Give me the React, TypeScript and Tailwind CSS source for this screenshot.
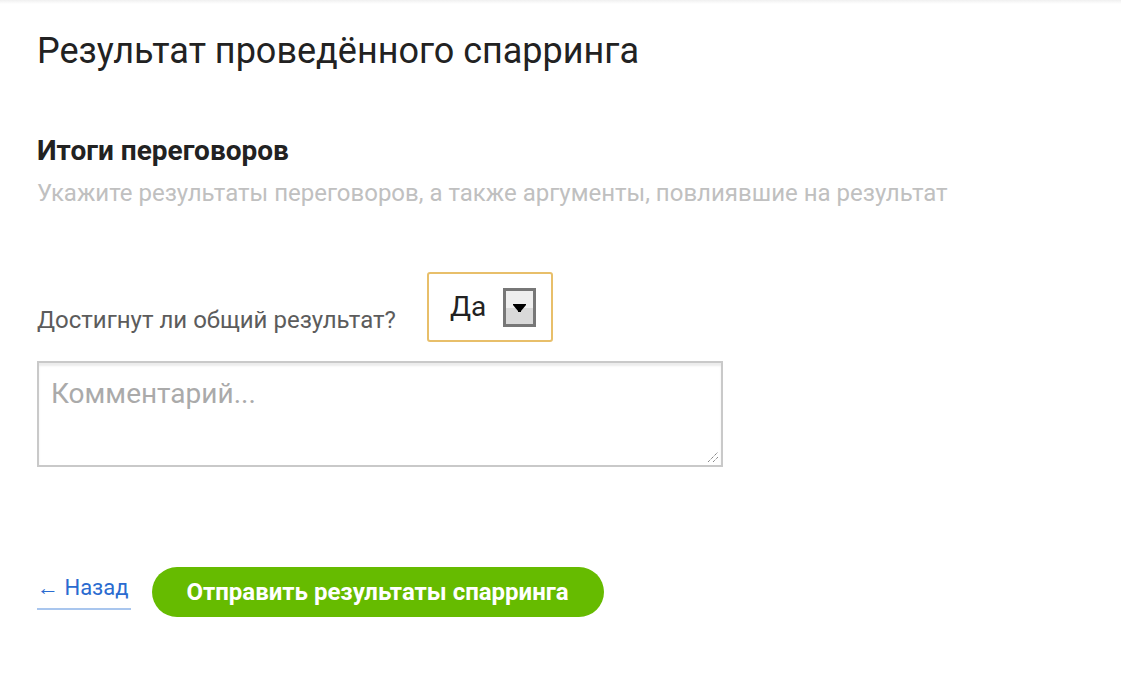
import { ChangeEvent, useState } from 'react';

function SelectBox({
  value,
  onChange,
}: {
  value: string;
  onChange: (value: string) => void;
}) {
  return (
    <div className="relative ml-[31px] flex h-[70px] w-[126px] items-center rounded-[3px] border-2 border-[#e8bf6a] pl-[21px]">
      <span className="w-[33px] text-[28px] leading-none text-[#222]">{value}</span>
      <div className="ml-[20px] h-[39px] w-[33px] border-[3px] border-[#777]">
        <div className="relative flex h-full flex-col">
          <div className="h-[17px] bg-[#efefef]" />
          <div className="flex-1 bg-[#d9d9d9]" />
          <svg
            className="absolute left-[7px] top-[13px]"
            width="13"
            height="8"
            viewBox="0 0 13 8"
          >
            <path d="M0 0h13v1l-5 6v1h-3v-1l-5-6z" fill="#000" />
          </svg>
        </div>
      </div>
      <select
        value={value}
        onChange={(e: ChangeEvent<HTMLSelectElement>) => onChange(e.target.value)}
        className="absolute inset-0 cursor-pointer opacity-0"
      >
        <option>Да</option>
        <option>Нет</option>
      </select>
    </div>
  );
}

export default function App() {
  const [reached, setReached] = useState('Да');
  const [comment, setComment] = useState('');

  return (
    <div
      className="min-h-[681px] bg-white"
      style={{ fontFamily: 'Roboto, "Noto Sans", sans-serif' }}
    >
      <div className="h-[4px] bg-gradient-to-b from-[#f0f0f0] to-white" />
      <div className="pl-[37px] pt-[27px]">
        <h1 className="text-[36px] font-normal leading-[40px] text-[#222]">
          Результат проведённого спарринга
        </h1>

        <h2 className="mt-[64px] text-[28px] font-bold leading-[32px] text-[#222]">
          Итоги переговоров
        </h2>
        <p className="mt-[12px] text-[24px] leading-[28px] text-[#c0c0c0]">
          Укажите результаты переговоров, а также аргументы, повлиявшие на результат
        </p>

        <div className="mt-[65px] flex items-end">
          <span className="mb-[8px] text-[24px] leading-[28px] text-[#5c5c5c]">
            Достигнут ли общий результат?
          </span>
          <SelectBox value={reached} onChange={setReached} />
        </div>

        <div className="relative mt-[19px] w-[686px]">
          <textarea
            value={comment}
            onChange={(e) => setComment(e.target.value)}
            placeholder="Комментарий..."
            className="block h-[106px] w-full resize-none border-2 border-[#c9c9c9] px-[12px] pt-[14px] text-[28px] leading-[34px] text-[#333] shadow-[inset_0_3px_2px_#ececec] outline-none placeholder:text-[#aaa]"
          />
          <svg
            className="pointer-events-none absolute bottom-[4px] right-[4px]"
            width="12"
            height="12"
            viewBox="0 0 12 12"
          >
            <path d="M1 11L11 1M6 11L11 6" stroke="#555" strokeWidth="1" strokeDasharray="1 1" />
          </svg>
        </div>

        <div className="mt-[100px] flex items-center">
          <a
            href="#"
            className="border-b-2 border-[#a9c6ee] pb-[6px] pr-[2px] text-[22px] leading-[28px] text-[#2a6bd0]"
          >
            ← Назад
          </a>
          <button
            type="button"
            className="ml-[21px] h-[50px] w-[452px] rounded-full bg-[#66bb00] text-[24px] font-bold text-white"
          >
            Отправить результаты спарринга
          </button>
        </div>
      </div>
    </div>
  );
}
